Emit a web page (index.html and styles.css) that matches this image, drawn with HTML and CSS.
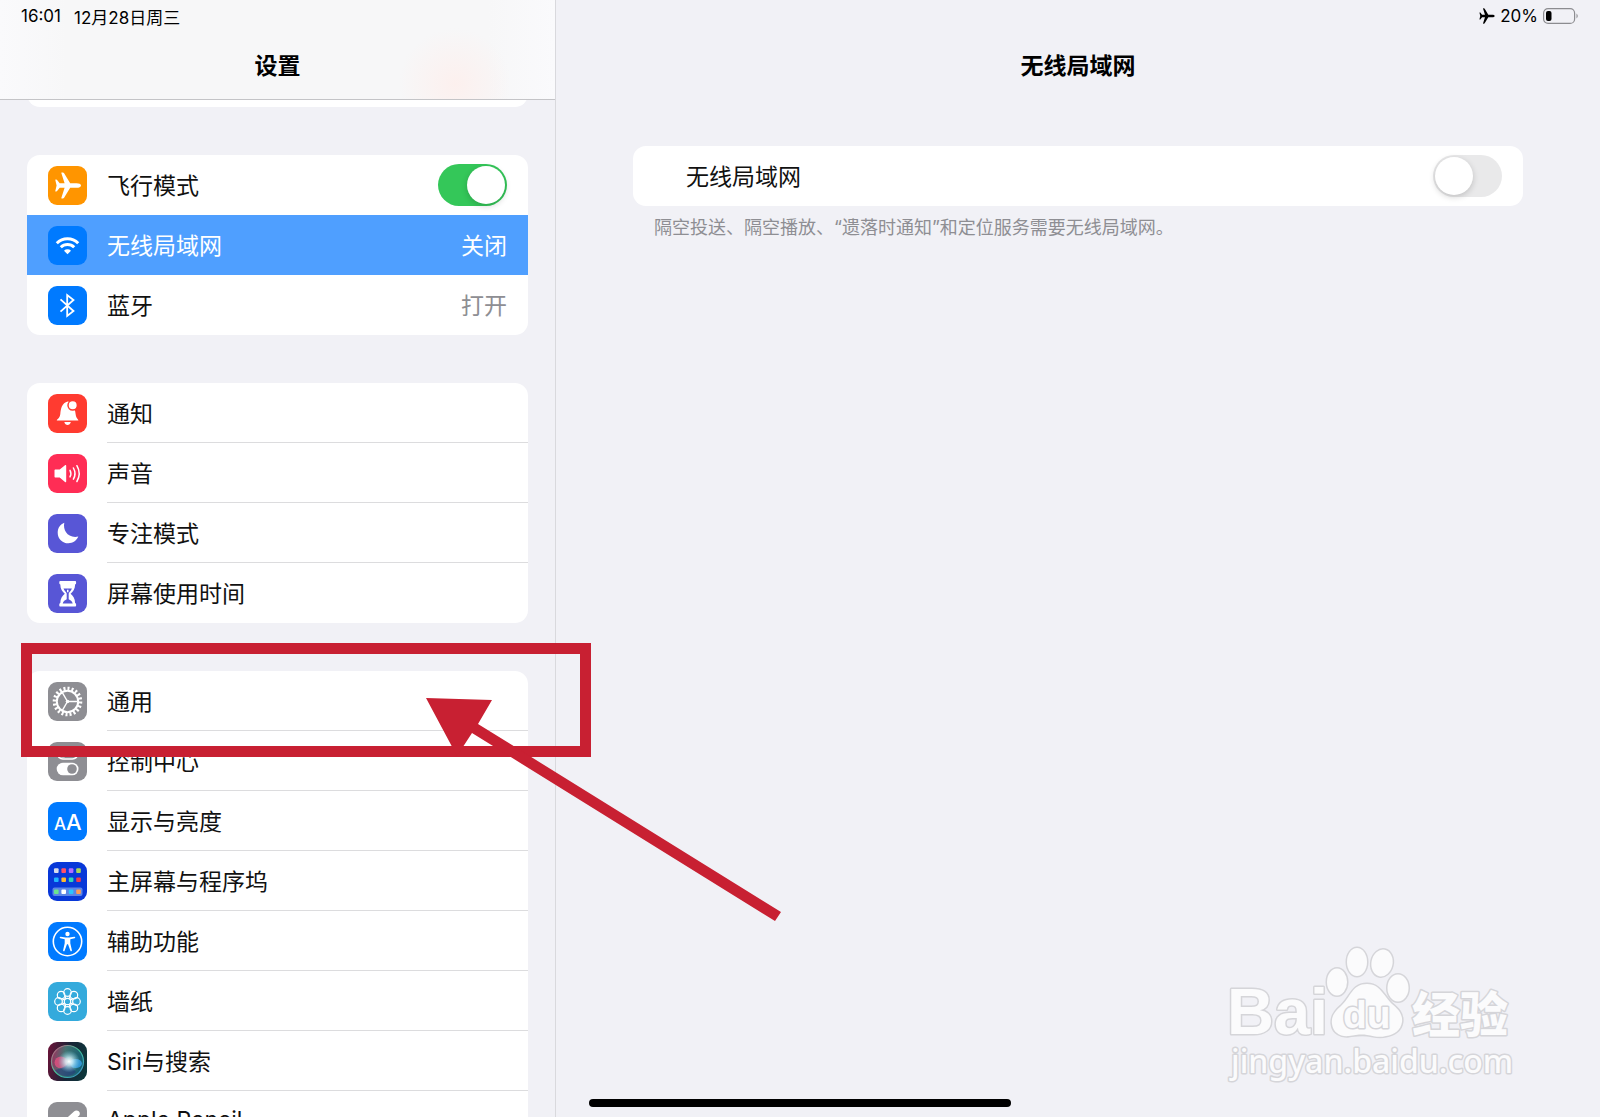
FILE: index.html
```html
<!DOCTYPE html>
<html lang="zh-CN">
<head>
  <meta charset="UTF-8" />
  <meta name="viewport" content="width=device-width, initial-scale=1.0"/>
  <title>设置</title>
  <link rel="stylesheet" href="styles.css">
</head>
<body>
  <svg class="defs" aria-hidden="true">
    <symbol id="plane" viewBox="7 6 27 27">
      <path d="M33.5 19.5c0-1.4-2-2.3-4.5-2.3h-6.300L16.600 7.300c-.3-.5-.7-.8-1.300-.8h-.9c-.5 0-.7.4-.5.8l3.200 9.900h-4.900l-2.600-3.300c-.2-.3-.5-.5-.9-.5h-.5c-.3 0-.5.3-.4.6l1.300 5.500-1.300 5.500c-.1.300.1.600.4.600h.5c.4 0 .7-.2.900-.5l2.600-3.300h4.900l-3.200 9.900c-.2.400 0 .8.500.8h.9c.6 0 1-.3 1.300-.8l6.100-9.900H29c2.500 0 4.500-.9 4.500-2.300z"/>
    </symbol>
  </svg>

  <div class="app">
    <aside class="sidebar">
      <header class="side-header">
        <div class="status">
          <span>16:01</span>
          <span>12月28日周三</span>
        </div>
        <h1>设置</h1>
      </header>

      <nav class="list">
        <div class="group group-end"></div>

        <div class="group">
          <label class="row">
            <svg class="icon orange" viewBox="0 0 39 39"><use href="#plane" x="6.500" y="6" width="27" height="27"/></svg>
            <span class="name">飞行模式</span>
            <input type="checkbox" class="switch" checked>
          </label>
          <a href="#" class="row selected">
            <svg class="icon blue" viewBox="0 0 39 39">
              <g fill="none" stroke="#fff" stroke-width="3"><path d="M8.800 17.200a15.200 15.200 0 0 1 21.400 0"/><path d="M12.800 21.200a9.500 9.500 0 0 1 13.400 0"/></g>
              <path d="M19.500 28.300l-3.500-3.500a5 5 0 0 1 7 0z"/>
            </svg>
            <span class="name">无线局域网</span>
            <span class="value">关闭</span>
          </a>
          <a href="#" class="row">
            <svg class="icon blue" viewBox="0 0 39 39"><path fill="none" stroke="#fff" stroke-width="1.800" d="M12.500 13.300L25.500 25l-6.300 5V9l6.300 5-13 11.700"/></svg>
            <span class="name">蓝牙</span>
            <span class="value">打开</span>
          </a>
        </div>

        <div class="group">
          <a href="#" class="row line">
            <svg class="icon red" viewBox="0 0 39 39">
              <path d="M8.800 26.500c0-1.500 3-2 3.500-6.500.5-5.500 1.500-11 7.500-12.600 5.500 1 7.300 7 7.800 12.600.5 4.500 2.800 5 2.800 6.500z"/>
              <path d="M16.300 28h6.500c-.8 4-5.700 4-6.500 0z"/>
              <circle cx="24.700" cy="11.300" r="4.700" stroke="#ff3b30" stroke-width="1.500"/>
            </svg>
            <span class="name">通知</span>
          </a>
          <a href="#" class="row line">
            <svg class="icon pink" viewBox="0 0 39 39">
              <path d="M7.500 15.600h4.200l5.300-4.300c.6-.5 1.200-.2 1.200.5v15.600c0 .7-.6 1-1.200.5l-5.300-4.300H7.500c-.6 0-1-.4-1-1v-6c0-.6.4-1 1-1z"/>
              <g fill="none" stroke="#fff" stroke-width="1.500" stroke-linecap="round"><path d="M22 16.300q1.800 3.300 0 6.600"/><path d="M25.400 14q3.200 5.600 0 11.200"/><path d="M28.900 11.700q4.600 7.900 0 15.800"/></g>
            </svg>
            <span class="name">声音</span>
          </a>
          <a href="#" class="row line">
            <svg class="icon indigo" viewBox="0 0 39 39"><path d="M16.300 8.800c-1.600 7.600 3.500 15.800 14 13.800C28.600 26.800 24.700 29.300 20.400 29.300 14.300 29.300 9.700 24.700 9.700 18.700c0-4.600 2.700-8.500 6.600-9.900z"/></svg>
            <span class="name">专注模式</span>
          </a>
          <a href="#" class="row">
            <svg class="icon indigo" viewBox="0 0 39 39">
              <path d="M12.500 7h14.400c.8 0 1.200.5 1.200 1.200v1.100c0 .7-.4 1.100-1 1.200 0 4.500-2 7-4.500 9.300 2.500 2.300 4.500 4.800 4.500 9.300.6.1 1 .5 1 1.200v1.100c0 .7-.4 1.200-1.200 1.200H12.500c-.8 0-1.200-.5-1.200-1.200v-1.100c0-.7.4-1.100 1-1.200 0-4.500 2-7 4.500-9.300-2.500-2.300-4.500-4.800-4.500-9.300-.6-.1-1-.5-1-1.200V8.200c0-.7.400-1.200 1.200-1.200z"/>
              <path fill="#5856d6" d="M15.500 14.500h8.400c-.8 2-2.500 3.400-3.200 5v5.800c1.500 1 3.600 1.700 4 4.200h-10c.4-2.500 2.500-3.200 4-4.200v-5.800c-.7-1.600-2.400-3-3.200-5z"/>
              <path d="M19 15.800h1.500v2.500H19z"/>
            </svg>
            <span class="name">屏幕使用时间</span>
          </a>
        </div>

        <div class="group">
          <div class="marked">
            <a href="#" class="row line">
              <svg class="icon gray" viewBox="0 0 39 39">
                <g fill="none" stroke="#fff">
                  <circle cx="19.500" cy="19.500" r="10.700" stroke-width="2"/>
                  <circle cx="19.500" cy="19.500" r="13" pathLength="40" stroke-width="3.600" stroke-dasharray="1 1"/>
                  <path stroke-width="1.400" d="M19.500 19.500h10M19.500 19.500l-5-8.700M19.500 19.500l-5 8.700"/>
                </g>
                <circle cx="19.500" cy="19.500" r="1.800"/>
              </svg>
              <span class="name">通用</span>
            </a>
            <div class="mark-box"></div>
            <svg class="mark-arrow" viewBox="0 0 355 222">
              <path d="M0 0L66 2 52 26 355 214 349 223 46 35 31 58z"/>
            </svg>
          </div>
          <a href="#" class="row line">
            <svg class="icon gray" viewBox="0 0 39 39">
              <rect x="9.400" y="6" width="20.500" height="11" rx="5.500" fill="none" stroke="#fff" stroke-width="1.500"/>
              <circle cx="15" cy="11.500" r="4"/>
              <rect x="8.700" y="20.700" width="21.800" height="12.600" rx="6.300"/>
              <circle cx="24" cy="27" r="4.800" fill="#8e8e93"/>
            </svg>
            <span class="name">控制中心</span>
          </a>
          <a href="#" class="row line">
            <svg class="icon blue" viewBox="0 0 39 39"><text x="6" y="27.700" font-size="17" font-weight="500">A</text><text x="18" y="27.700" font-size="22" font-weight="500">A</text></svg>
            <span class="name">显示与亮度</span>
          </a>
          <a href="#" class="row line">
            <svg class="icon home" viewBox="0 0 39 39">
              <rect x="4.500" y="25.500" width="30" height="8.600" rx="2" fill="#5b85e6"/>
              <g><rect x="6" y="6.300" width="4.600" height="4.600" rx="1" fill="#d8dcec"/><rect x="13.400" y="6.300" width="4.600" height="4.600" rx="1" fill="#ff5068"/><rect x="20.800" y="6.300" width="4.600" height="4.600" rx="1" fill="#b46cff"/><rect x="28.200" y="6.300" width="4.600" height="4.600" rx="1" fill="#a8d65c"/></g>
              <g><rect x="6" y="15.500" width="4.600" height="4.600" rx="1" fill="#1fb4ff"/><rect x="13.400" y="15.500" width="4.600" height="4.600" rx="1" fill="#ffb92e"/><rect x="20.800" y="15.500" width="4.600" height="4.600" rx="1" fill="#2fd6b4"/><rect x="28.200" y="15.500" width="4.600" height="4.600" rx="1" fill="#f03a4c"/></g>
              <g><rect x="6" y="27.500" width="4.600" height="4.600" rx="1" fill="#6be58c"/><rect x="13.400" y="27.500" width="4.600" height="4.600" rx="1" fill="#fff"/><rect x="20.800" y="27.500" width="4.600" height="4.600" rx="1" fill="#2cc4ff"/><rect x="28.200" y="27.500" width="4.600" height="4.600" rx="1" fill="#ff9c55"/></g>
            </svg>
            <span class="name">主屏幕与程序坞</span>
          </a>
          <a href="#" class="row line">
            <svg class="icon blue" viewBox="0 0 39 39">
              <circle cx="19.500" cy="19.500" r="14.200" fill="none" stroke="#fff" stroke-width="1.600"/>
              <circle cx="19.500" cy="12" r="2.200"/>
              <path d="M12.700 14.700l5 .9h3.600l5-.9c1.100-.1 1.300 1.200.3 1.500l-4.300 1.100v4l1.600 7c.2 1.100-1.200 1.400-1.500.4l-2.400-6.400h-1l-2.400 6.400c-.3 1-1.700.7-1.500-.4l1.600-7v-4l-4.300-1.100c-1-.3-.8-1.600.3-1.500z"/>
            </svg>
            <span class="name">辅助功能</span>
          </a>
          <a href="#" class="row line">
            <svg class="icon cyan" viewBox="0 0 39 39">
              <g fill="none" stroke="#fff" stroke-width="1.200">
                <circle cx="19.500" cy="19.500" r="3.200"/>
                <circle cx="19.500" cy="10.500" r="3.800"/><circle cx="25.900" cy="13.100" r="3.800"/><circle cx="28.500" cy="19.500" r="3.800"/><circle cx="25.900" cy="25.900" r="3.800"/>
                <circle cx="19.500" cy="28.500" r="3.800"/><circle cx="13.100" cy="25.900" r="3.800"/><circle cx="10.500" cy="19.500" r="3.800"/><circle cx="13.100" cy="13.100" r="3.800"/>
                <path d="M18 14l-1.200 3-3 1.200M21 14l1.200 3 3 1.200M18 25l-1.200-3-3-1.200M21 25l1.200-3 3-1.200"/>
              </g>
            </svg>
            <span class="name">墙纸</span>
          </a>
          <a href="#" class="row line">
            <svg class="icon siri" viewBox="0 0 39 39">
              <defs>
                <linearGradient id="orb" x1="0" y1="0" x2="1" y2="0.200"><stop offset="0" stop-color="#c22c66"/><stop offset=".45" stop-color="#4f8f86"/><stop offset="1" stop-color="#176f86"/></linearGradient>
                <linearGradient id="rim" x1="0" y1="0" x2="1" y2="1"><stop offset="0" stop-color="#d0507c"/><stop offset=".5" stop-color="#3fc79a"/><stop offset="1" stop-color="#3a86c8"/></linearGradient>
                <radialGradient id="glow"><stop offset="0" stop-color="#fff"/><stop offset=".35" stop-color="#d6f4fa" stop-opacity=".8"/><stop offset="1" stop-color="#7fd0e8" stop-opacity="0"/></radialGradient>
              </defs>
              <circle cx="19.500" cy="19.500" r="16" fill="url(#orb)" fill-opacity=".75" stroke="url(#rim)" stroke-width="1.200"/>
              <ellipse cx="13" cy="20.500" rx="6.500" ry="6" fill="#ff4f86" fill-opacity=".65"/>
              <ellipse cx="27.500" cy="21.500" rx="6.500" ry="4.500" fill="#3aa6f0" fill-opacity=".75"/>
              <path d="M7 28q10-2 14-8 3 6 7 10-4 4-9 4-8 0-12-6z" fill="#26347c" fill-opacity=".55"/>
              <circle cx="21" cy="19.500" r="11" fill="url(#glow)"/>
            </svg>
            <span class="name">Siri与搜索</span>
          </a>
          <a href="#" class="row">
            <svg class="icon gray" viewBox="0 0 39 39"><path d="M7 31l3-7L26 9.500c2.500-2.500 7.500 0 5.300 4L14 28.500z"/></svg>
            <span class="name">Apple Pencil</span>
          </a>
        </div>
      </nav>
    </aside>

    <main class="detail">
      <div class="status status-right">
        <svg class="mini-plane"><use href="#plane"/></svg>
        <span>20%</span>
        <svg class="battery" viewBox="0 0 36 16">
          <rect x=".6" y=".6" width="31" height="14.800" rx="4.500" fill="none" stroke="#8c8c90" stroke-width="1.200"/>
          <rect x="3" y="3" width="5.500" height="10" rx="2"/>
          <path d="M33.500 5.500q2.500 2.500 0 5z" fill="#8c8c90"/>
        </svg>
      </div>
      <h2>无线局域网</h2>

      <section class="content">
        <label class="row card">
          <span class="name">无线局域网</span>
          <input type="checkbox" class="switch">
        </label>
        <p class="hint">隔空投送、隔空播放、“遗落时通知”和定位服务需要无线局域网。</p>
      </section>

      <svg class="watermark" viewBox="0 0 300 150">
        <g class="ink">
          <text class="latin" x="1" y="93" font-size="65">Bai</text>
          <ellipse cx="111" cy="41" rx="10" ry="13.500"/>
          <ellipse cx="131" cy="21" rx="10" ry="14"/>
          <ellipse cx="156" cy="22" rx="10.500" ry="13.500" transform="rotate(12 156 22)"/>
          <ellipse cx="172" cy="47" rx="10.500" ry="13.500"/>
          <path d="M141 43c-15 0-16 13-26 22-7 6-10 11-9 18 1 9 9 13 17 12 7-1 12-2 18-1 7 1 12 3 19 1 8-1 15-6 16-14 1-8-4-13-10-18-9-9-12-20-25-20z"/>
          <text class="du" x="117" y="87" font-size="39">du</text>
          <text class="cjk" x="186" y="91" font-size="48">经验</text>
          <text class="site" x="5" y="132" font-size="32">jingyan.baidu.com</text>
        </g>
      </svg>
    </main>
  </div>

  <div class="home-bar"></div>
</body>
</html>
```
FILE: styles.css
```css
* {
  box-sizing: border-box;
}

body {
  margin: 0;
  height: 100vh;
  overflow: hidden;
  background: #f1f1f6;
  color: #111;
  font-family: Inter, "Noto Sans CJK SC", sans-serif;
  font-size: 23px;
}

.defs {
  position: absolute;
  width: 0;
  height: 0;
}

.app {
  display: grid;
  grid-template-columns: 556px 1fr;
  height: 100%;
}

/* left column */
.sidebar {
  height: 100vh;
  border-right: 1px solid #d9d9dd;
}

.side-header {
  position: relative;
  z-index: 1;
  height: 100px;
  border-bottom: 1px solid #c4c4c7;
  background: radial-gradient(circle at 455px 84px, #fcf0ee, rgba(247, 247, 248, 0) 56px), linear-gradient(90deg, #fafafc, #f7f7f8 12%, #f7f7f8 88%, #fafafc);
}

.status {
  display: flex;
  align-items: center;
  gap: 13px;
  height: 32px;
  padding: 0 21px;
  color: #000;
  font-size: 17px;
}

h1, h2 {
  margin: 16px 0 0;
  color: #000;
  font-size: 23px;
  font-weight: 600;
  line-height: 36px;
  text-align: center;
}

.list {
  display: flex;
  flex-direction: column;
  gap: 48px;
  padding: 0 27px;
}

.group {
  border-radius: 13px;
  background: #fff;
}

/* tail of the account card, scrolled under the header */
.group-end {
  height: 27px;
  margin-top: -20px;
}

.row {
  position: relative;
  display: flex;
  align-items: center;
  gap: 20px;
  height: 60px;
  padding: 0 21px;
  color: inherit;
  text-decoration: none;
}

.name,
.value {
  padding-bottom: 2px;
}

.name {
  flex: 1;
}

.line::after {
  content: "";
  position: absolute;
  right: 0;
  bottom: 0;
  left: 80px;
  height: 1px;
  background: #dcdcde;
}

.value {
  color: #8e8e93;
}

.selected,
.selected .value {
  background: #4f9fff;
  color: #fff;
}

/* icons */
.icon {
  flex: none;
  width: 39px;
  height: 39px;
  border-radius: 9px;
  fill: #fff;
}

.orange { background: #ff9500; }
.blue { background: #007aff; }
.red { background: #ff3b30; }
.pink { background: #ff2d55; }
.indigo { background: #5856d6; }
.gray { background: #8e8e93; }
.cyan { background: #34aadc; }
.home { background: #0838d8; }
.siri { background: linear-gradient(100deg, #6d1238, #182436 50%, #0b3a3c); }

/* switch */
.switch {
  appearance: none;
  flex: none;
  width: 69px;
  height: 42px;
  margin: 0;
  padding: 2px;
  border-radius: 21px;
  background: #e9e9ea;
}

.switch::before {
  content: "";
  display: block;
  width: 38px;
  height: 38px;
  border-radius: 50%;
  background: #fff;
  box-shadow: 0 2px 6px rgba(0, 0, 0, 0.18);
}

.switch:checked {
  background: #34c759;
}

.switch:checked::before {
  margin-left: auto;
}

/* red box and arrow over the general row */
.marked {
  position: relative;
  z-index: 2;
}

.mark-box {
  position: absolute;
  top: -28px;
  left: -6px;
  width: 570px;
  height: 114px;
  border: 11px solid #c82032;
  pointer-events: none;
}

.mark-arrow {
  position: absolute;
  top: 27px;
  left: 399px;
  width: 355px;
  height: 222px;
  overflow: visible;
  fill: #c82032;
  pointer-events: none;
}

/* right column */
.detail {
  display: flex;
  flex-direction: column;
}

.status-right {
  justify-content: flex-end;
  gap: 5px;
}

.mini-plane {
  width: 16px;
  height: 16px;
}

.battery {
  width: 36px;
  height: 16px;
}

.content {
  padding: 62px 77px 0;
}

.card {
  padding-left: 53px;
  border-radius: 13px;
  background: #fff;
}

.hint {
  margin: 8px 21px;
  color: #8e8e93;
  font-size: 18px;
  line-height: 28px;
}

.watermark {
  width: 300px;
  height: 150px;
  margin: auto 74px 26px auto;
}

.ink {
  fill: #fbfbfc;
  stroke: #d5d5d9;
  stroke-width: 3px;
  stroke-linejoin: round;
  paint-order: stroke;
}

.latin,
.du {
  font-family: "Liberation Sans", sans-serif;
  font-weight: 700;
}

.cjk {
  font-family: "Noto Sans CJK SC", sans-serif;
  font-weight: 900;
}

.site {
  font-family: "Noto Sans", sans-serif;
  font-weight: 500;
}

.home-bar {
  position: fixed;
  bottom: 10px;
  left: 50%;
  width: 422px;
  height: 8px;
  margin-left: -211px;
  border-radius: 4px;
  background: #000;
}
```
